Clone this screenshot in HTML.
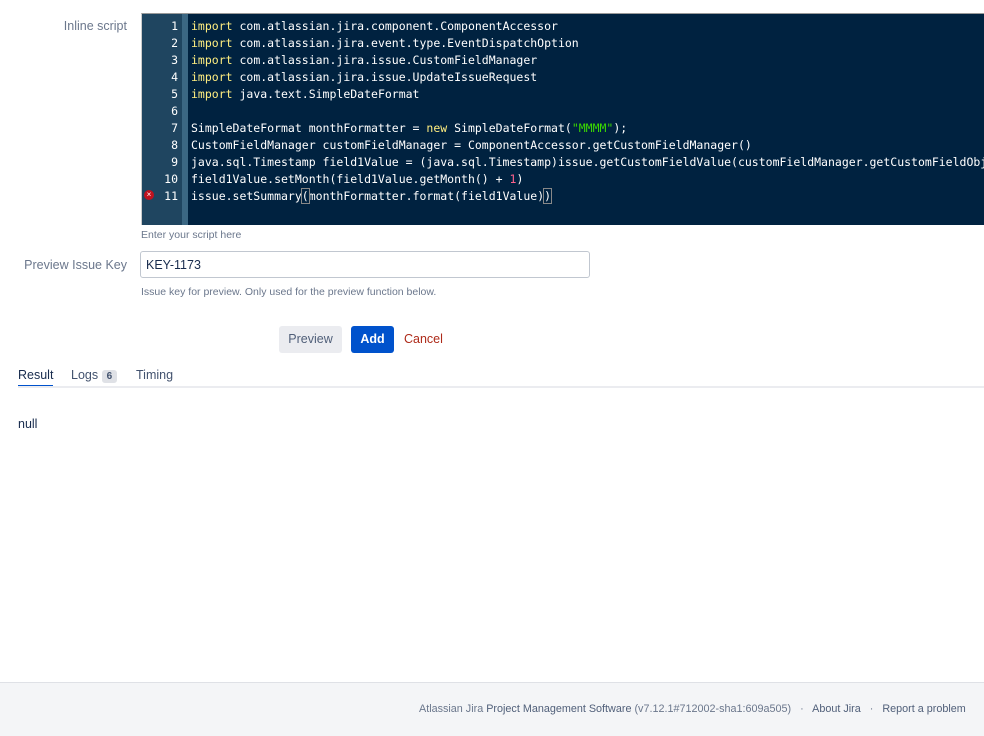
<!DOCTYPE html>
<html><head><meta charset="utf-8"><style>
body{margin:0;width:984px;height:735px;background:#fff;font-family:"Liberation Sans",sans-serif;position:relative;overflow:hidden}
.lbl{position:absolute;color:#6b778c;font-size:12.5px;text-align:right;width:127px;left:0}
.ed{position:absolute;left:141px;top:13px;width:843px;height:212px;background:#002240;border-top:1px solid #999;border-left:1px solid #ccc;box-sizing:border-box}
.gut{position:absolute;left:0;top:0;width:40px;height:100%;background:#1f4560}
.gut2{position:absolute;left:40px;top:0;width:6px;height:100%;background:#3b6783}
.code{position:absolute;left:49px;top:4px;font-family:"DejaVu Sans Mono",monospace;font-size:11.5px;line-height:17px;color:#fff;white-space:pre}
.nums{position:absolute;left:0;top:4px;width:36px;text-align:right;font-family:"DejaVu Sans Mono",monospace;font-size:11.5px;line-height:17px;color:#fff;white-space:pre}
.k{color:#ffee80}.s{color:#3ad900}.n{color:#ff628c}
.err{position:absolute;left:2px;top:176px;width:10px;height:10px;border-radius:50%;background:#c0121f;color:#fff;font-size:8px;line-height:10px;text-align:center}
.help{position:absolute;left:141px;color:#6b778c;font-size:10.5px}
</style></head><body>
<div class="lbl" style="top:19px">Inline script</div>
<div class="ed"><div class="gut"></div><div class="gut2"></div>
<div class="nums">1
2
3
4
5
6
7
8
9
10
11</div>
<div class="err">×</div>
<div class="code"><span class="k">import</span> com.atlassian.jira.component.ComponentAccessor
<span class="k">import</span> com.atlassian.jira.event.type.EventDispatchOption
<span class="k">import</span> com.atlassian.jira.issue.CustomFieldManager
<span class="k">import</span> com.atlassian.jira.issue.UpdateIssueRequest
<span class="k">import</span> java.text.SimpleDateFormat

SimpleDateFormat monthFormatter = <span class="k">new</span> SimpleDateFormat(<span class="s">"MMMM"</span>);
CustomFieldManager customFieldManager = ComponentAccessor.getCustomFieldManager()
java.sql.Timestamp field1Value = (java.sql.Timestamp)issue.getCustomFieldValue(customFieldManager.getCustomFieldObj
field1Value.setMonth(field1Value.getMonth() + <span class="n">1</span>)
issue.setSummary<span style="outline:1px solid #888">(</span>monthFormatter.format(field1Value)<span style="outline:1px solid #888">)</span></div>
</div>
<div class="help" style="top:229px">Enter your script here</div>
<div class="lbl" style="top:258px">Preview Issue Key</div>
<div style="position:absolute;left:140px;top:251px;width:450px;height:27px;border:1px solid #c1c7d0;border-radius:3px;box-sizing:border-box;font-size:12.5px;color:#172b4d;padding:6px 5px">KEY-1173</div>
<div class="help" style="top:286px">Issue key for preview. Only used for the preview function below.</div>
<div style="position:absolute;left:279px;top:326px;width:63px;height:27px;background:#ebecf0;border-radius:3px;color:#505f79;font-size:12.5px;text-align:center;line-height:27px">Preview</div>
<div style="position:absolute;left:351px;top:326px;width:43px;height:27px;background:#0052cc;border-radius:3px;color:#fff;font-weight:bold;font-size:12.5px;text-align:center;line-height:27px">Add</div>
<div style="position:absolute;left:404px;top:332px;color:#ae2a19;font-size:12.5px">Cancel</div>
<div style="position:absolute;left:18px;top:368px;font-size:12.5px;color:#172b4d">Result</div>
<div style="position:absolute;left:18px;top:385px;width:35px;height:3px;background:#0052cc"></div>
<div style="position:absolute;left:71px;top:368px;font-size:12.5px;color:#42526e">Logs <span style="background:#dfe1e6;font-size:10px;font-weight:bold;padding:1px 5px;border-radius:3px">6</span></div>
<div style="position:absolute;left:136px;top:368px;font-size:12.5px;color:#42526e">Timing</div>
<div style="position:absolute;left:18px;top:386px;width:966px;height:2px;background:#ebecf0"></div>
<div style="position:absolute;left:18px;top:417px;font-size:12.5px;color:#172b4d">null</div>
<div style="position:absolute;left:0;top:682px;width:984px;height:53px;background:#f4f5f7;border-top:1px solid #dfe1e6"></div>
<div style="position:absolute;left:419px;top:703px;font-size:10.8px;color:#6b778c;white-space:nowrap">Atlassian Jira <span style="color:#505f79">Project Management Software</span> (v7.12.1#712002-sha1:609a505) &nbsp;&nbsp;·&nbsp;&nbsp; <span style="color:#505f79">About Jira</span> &nbsp;&nbsp;·&nbsp;&nbsp; <span style="color:#505f79">Report a problem</span></div>
</body></html>
